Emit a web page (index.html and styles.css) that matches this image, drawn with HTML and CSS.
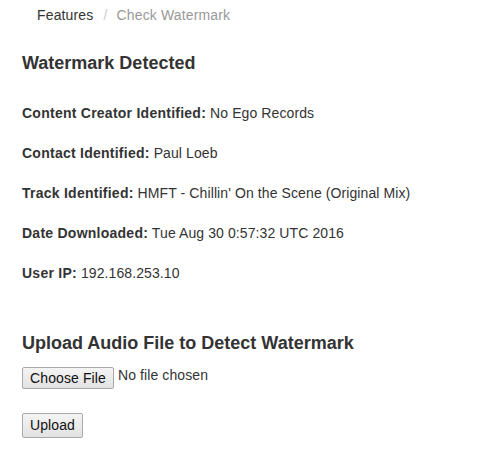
FILE: index.html
```html
<!DOCTYPE html>
<html>
<head>
<meta charset="utf-8">
<link rel="stylesheet" href="styles.css">
</head>
<body>
<div class="page">
  <ol class="crumbs">
    <li class="crumb">Features</li>
    <li class="sep">/</li>
    <li class="crumb active">Check Watermark</li>
  </ol>
  <h4 class="title">Watermark Detected</h4>
  <p class="row"><b>Content Creator Identified:</b> No Ego Records</p>
  <p class="row"><b>Contact Identified:</b> Paul Loeb</p>
  <p class="row"><b>Track Identified:</b> HMFT - Chillin' On the Scene (Original Mix)</p>
  <p class="row"><b>Date Downloaded:</b> Tue Aug 30 0:57:32 UTC 2016</p>
  <p class="row"><b>User IP:</b> 192.168.253.10</p>
  <h4 class="title upload-title">Upload Audio File to Detect Watermark</h4>
  <div class="file">
    <button class="btn choose" type="button">Choose File</button>
    <span class="nofile">No file chosen</span>
  </div>
  <button class="btn upload" type="button">Upload</button>
</div>
</body>
</html>
```
FILE: styles.css
```css
html, body {
  margin: 0;
  background: #fff;
}
.page {
  padding: 5px 0 0 22px;
  font-family: "Liberation Sans", Arial, sans-serif;
  font-size: 14px;
  line-height: 20px;
  color: #333;
  letter-spacing: 0.1px;
}
.crumbs {
  list-style: none;
  margin: 0;
  padding: 0 15px;
  display: flex;
  height: 20px;
  letter-spacing: 0.15px;
}
.crumb { color: #333; }
.crumb.active { color: #999; }
.sep {
  color: #ccc;
  padding: 0 9px 0 10px;
}
.title {
  margin: 28px 0 30px;
  font-size: 18px;
  font-weight: bold;
  line-height: 20px;
  letter-spacing: 0;
}
.row {
  margin: 0 0 20px;
}
.row b {
  font-weight: bold;
  letter-spacing: 0.25px;
}
.upload-title {
  margin: 50px 0 14px;
}
.file {
  display: flex;
  align-items: flex-start;
  gap: 4px;
}
.btn {
  font-family: "Liberation Sans", Arial, sans-serif;
  font-size: 14px;
  color: #111;
  background: linear-gradient(#f4f4f4, #e2e2e2);
  border: 1px solid #a9a9a9;
  border-radius: 2px;
  margin: 0;
  display: block;
  letter-spacing: 0.1px;
}
.choose {
  width: 92px;
  height: 22px;
  padding: 0;
  line-height: 20px;
}
.nofile {
  line-height: 16px;
}
.upload {
  margin-top: 24px;
  width: 61px;
  height: 25px;
  padding: 0;
  line-height: 23px;
}
```
